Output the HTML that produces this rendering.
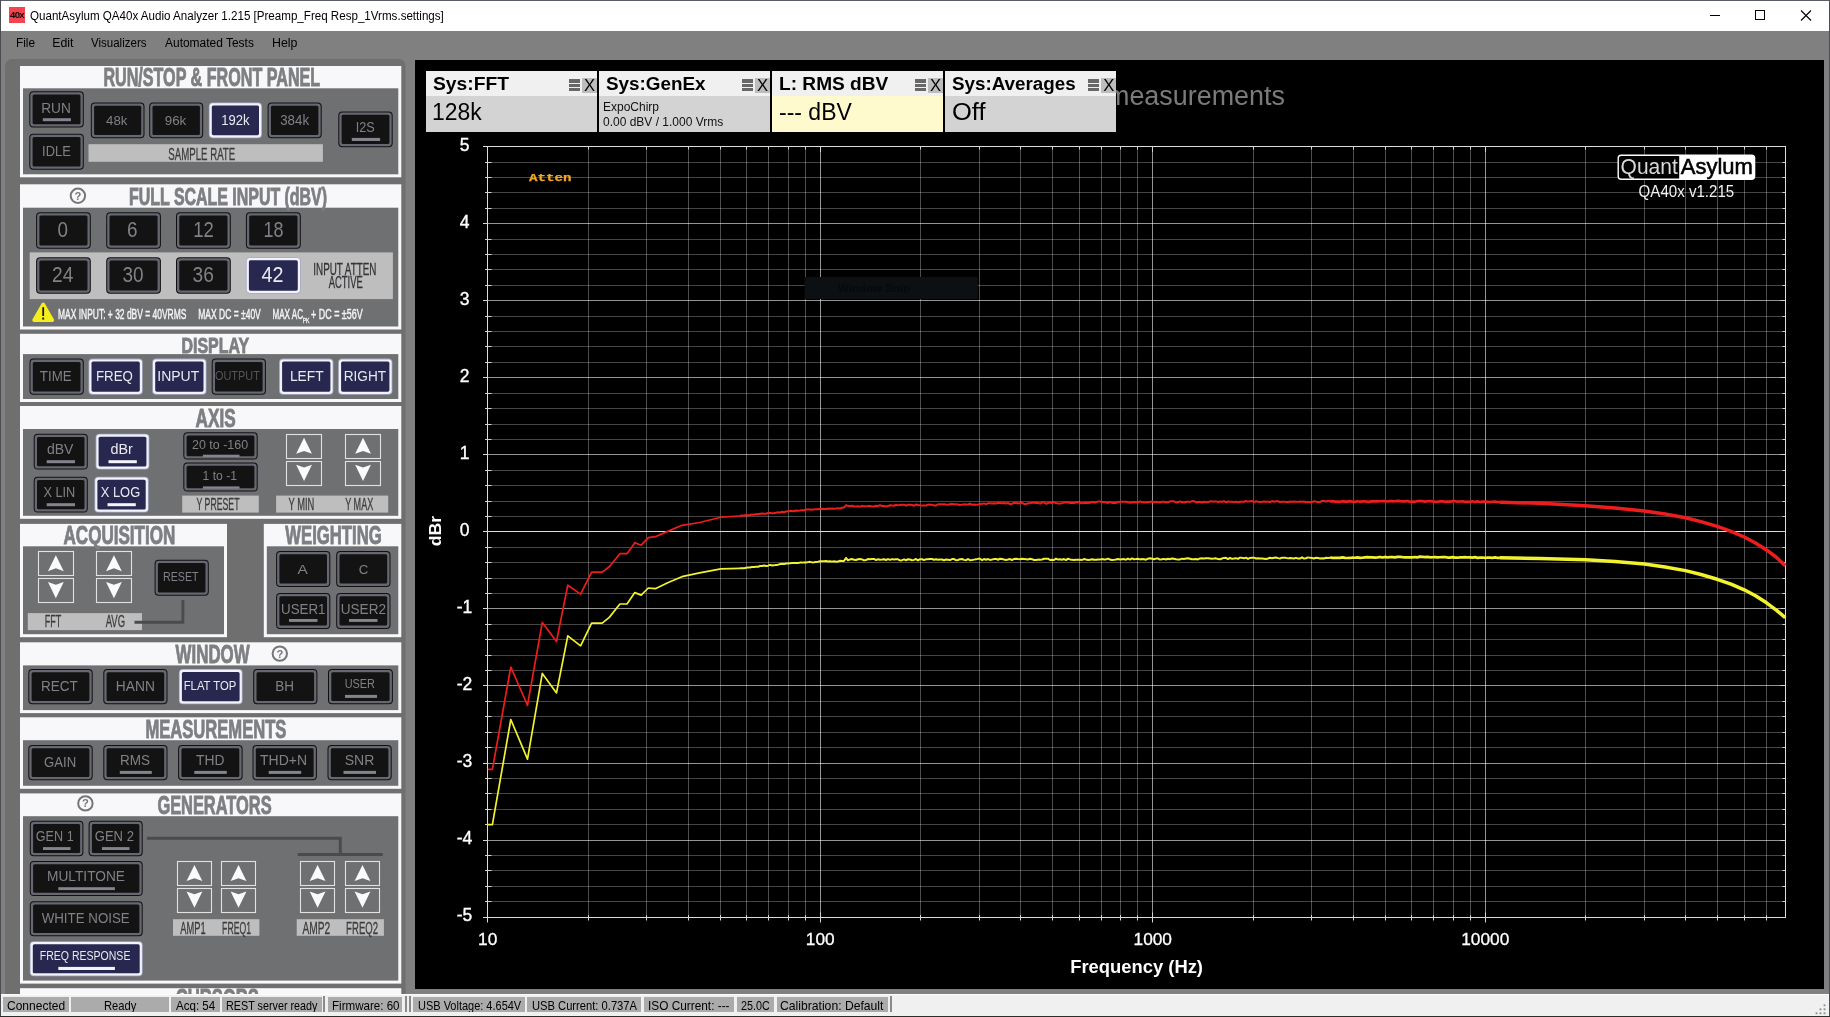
<!DOCTYPE html>
<html lang="en">
<head>
<meta charset="utf-8">
<title>QuantAsylum QA40x Audio Analyzer</title>
<style>
*{box-sizing:border-box;margin:0;padding:0}
html,body{width:1830px;height:1017px;overflow:hidden;background:#808080;font-family:"Liberation Sans",sans-serif}
#app{position:absolute;left:0;top:0;width:1830px;height:1017px;overflow:hidden;background:#808080}
#titlebar{position:absolute;left:0;top:0;width:1830px;height:31px;background:#ffffff;border-top:1px solid #5a5f66}
#appicon{position:absolute;left:9px;top:6.2px;width:16px;height:15.6px;background:#f4444f;color:#160808;font-size:9.6px;font-weight:bold;line-height:16.5px;letter-spacing:-0.7px;text-align:center;overflow:hidden}
#title{position:absolute;left:30.4px;top:7px;font-size:12.3px;line-height:16px;color:#000;white-space:nowrap;transform-origin:0 50%;transform:scaleX(0.9425)}
.wc{position:absolute;top:0px;height:29px;width:46px}
#menubar{position:absolute;left:0;top:31px;width:1830px;height:28px;background:#808080}
#menubar span{position:absolute;top:4px;font-size:12.3px;line-height:16px;color:#000;white-space:nowrap;transform-origin:0 50%}
#panel{position:absolute;left:0;top:0;width:414px;height:994.4px;overflow:hidden}
#panel svg{position:absolute;left:0;top:0}
#chartbg{position:absolute;left:414.8px;top:59.8px;width:1409.2px;height:929.2px;background:#000}
#chart{position:absolute;left:0;top:0;width:1830px;height:1017px;pointer-events:none}
svg text{font-family:"Liberation Sans",sans-serif}
#app{will-change:transform}
#meas{position:absolute;left:1106.7px;top:80px;font-size:27px;line-height:32px;color:#7b7b7b;white-space:nowrap;transform-origin:0 50%;transform:scaleX(0.996)}
.ib{position:absolute;top:71.2px;width:171px;height:60.4px;background:#d3d3d3;overflow:hidden}
.ib.yl{background:#fffacd}
.ih{position:absolute;left:0;top:0;width:171px;height:24.8px;background:#f0f0f0}
.it{position:absolute;left:7.2px;top:2.5px;font-size:17.6px;line-height:20px;font-weight:bold;color:#000;white-space:nowrap;transform-origin:0 50%}
.im{position:absolute;left:143.3px;top:8.3px;width:10.7px;height:13px}
.im i{display:block;height:3.2px;margin-bottom:1.2px;background:#686868}
.ix{position:absolute;left:156.1px;top:6.9px;width:15.1px;height:14.8px;background:#bdbdbd;color:#000;font-size:16.6px;line-height:15.6px;text-align:center}
.v1{position:absolute;left:6.6px;top:27.2px;font-size:24.2px;line-height:28px;color:#000;white-space:nowrap;transform-origin:0 50%}
.v2{position:absolute;left:4.4px;top:28.5px;font-size:12.2px;line-height:15px;color:#111;white-space:nowrap;transform-origin:0 50%;transform:scaleX(0.984)}
#statusbar{position:absolute;left:0;top:994.2px;width:1830px;height:22.8px;background:#f0f0f0;border-top:1.6px solid #fdfdfd}
.sc{position:absolute;top:1.7px;height:14.8px;background:#ababab;font-size:12.2px;line-height:14.6px;color:#000;white-space:nowrap;overflow:hidden}
.sc span{position:absolute;top:2.4px;transform-origin:0 50%}
.ss{position:absolute;top:1.2px;width:2px;height:15.6px;background:#8a8a8a}
#grip{position:absolute;left:1815px;top:8.4px;width:11px;height:11px}
#edgeR{position:absolute;left:1828.8px;top:0;width:1.2px;height:1017px;background:#4a4d52}
#edgeB{position:absolute;left:0;top:1015.6px;width:1830px;height:1.4px;background:#2a2d2a}
#edgeL{position:absolute;left:0;top:0;width:0.8px;height:1017px;background:#4a4d52}
</style>
</head>
<body>
<div id="app">
  <div id="menubar">
    <span style="left:15.5px;transform:scaleX(0.964)">File</span><span style="left:52.3px;transform:scaleX(1.000)">Edit</span><span style="left:91.4px;transform:scaleX(0.937)">Visualizers</span><span style="left:164.8px;transform:scaleX(0.973)">Automated Tests</span><span style="left:271.7px;transform:scaleX(1.008)">Help</span>
  </div>
  <div id="chartbg"></div>
  <div id="panel">
    <svg width="414" height="1000" viewBox="0 0 414 1000">
<rect x="5" y="59" width="400.6" height="941" fill="#6f6f70" rx="7"/>
<rect x="20" y="66" width="381.3" height="111.3" fill="#f8f8fa"/>
<rect x="23" y="88.3" width="375.3" height="86" fill="#6f7072"/>
<text x="103.4" y="85.6" font-size="25" textLength="216.8" lengthAdjust="spacingAndGlyphs" fill="#7d7f82" font-weight="bold" stroke="#7d7f82" stroke-width="0.9">RUN/STOP &amp; FRONT PANEL</text>
<rect x="29.3" y="91.3" width="54.5" height="36.2" fill="#101012" rx="4"/>
<rect x="30.3" y="92.3" width="52.5" height="34.2" fill="#676771" rx="3.2"/>
<rect x="32.6" y="94.6" width="47.9" height="29.6" fill="#131313" rx="1.5"/>
<text x="41.2" y="112.8" font-size="15.23" textLength="29.6" lengthAdjust="spacingAndGlyphs" fill="#808086" font-weight="normal">RUN</text>
<rect x="42.8" y="118.2" width="28.1" height="3" fill="#84848e"/>
<rect x="29.3" y="133.8" width="54.5" height="36" fill="#101012" rx="4"/>
<rect x="30.3" y="134.8" width="52.5" height="34" fill="#676771" rx="3.2"/>
<rect x="32.6" y="137.1" width="47.9" height="29.4" fill="#131313" rx="1.5"/>
<text x="42.1" y="156.3" font-size="14.66" textLength="28.7" lengthAdjust="spacingAndGlyphs" fill="#808086" font-weight="normal">IDLE</text>
<rect x="90.8" y="102.5" width="53.7" height="35.7" fill="#101012" rx="4"/>
<rect x="91.8" y="103.5" width="51.7" height="33.7" fill="#676771" rx="3.2"/>
<rect x="94.1" y="105.8" width="47.1" height="29.1" fill="#131313" rx="1.5"/>
<text x="106.1" y="125" font-size="13.68" textLength="21.3" lengthAdjust="spacingAndGlyphs" fill="#808086" font-weight="normal">48k</text>
<rect x="149.2" y="102.5" width="54" height="35.7" fill="#101012" rx="4"/>
<rect x="150.2" y="103.5" width="52" height="33.7" fill="#676771" rx="3.2"/>
<rect x="152.5" y="105.8" width="47.4" height="29.1" fill="#131313" rx="1.5"/>
<text x="164.7" y="125" font-size="13.68" textLength="21.6" lengthAdjust="spacingAndGlyphs" fill="#808086" font-weight="normal">96k</text>
<rect x="208.8" y="102.5" width="53.2" height="35.7" fill="#a9a9c4" rx="4"/>
<rect x="209.6" y="103.3" width="51.6" height="34.1" fill="#f2f2ff" rx="3.3"/>
<rect x="211.8" y="105.5" width="47.2" height="29.7" fill="#27274f" rx="1.6"/>
<text x="221.2" y="125" font-size="13.82" textLength="28.3" lengthAdjust="spacingAndGlyphs" fill="#e9e9f1" font-weight="normal">192k</text>
<rect x="267.6" y="102.5" width="54.1" height="35.7" fill="#101012" rx="4"/>
<rect x="268.6" y="103.5" width="52.1" height="33.7" fill="#676771" rx="3.2"/>
<rect x="270.9" y="105.8" width="47.5" height="29.1" fill="#131313" rx="1.5"/>
<text x="280.2" y="125" font-size="13.82" textLength="28.9" lengthAdjust="spacingAndGlyphs" fill="#808086" font-weight="normal">384k</text>
<rect x="338.3" y="111.5" width="54.4" height="35.8" fill="#101012" rx="4"/>
<rect x="339.3" y="112.5" width="52.4" height="33.8" fill="#676771" rx="3.2"/>
<rect x="341.6" y="114.8" width="47.8" height="29.2" fill="#131313" rx="1.5"/>
<text x="355.8" y="132.1" font-size="14.38" textLength="19" lengthAdjust="spacingAndGlyphs" fill="#808086" font-weight="normal">I2S</text>
<rect x="351.8" y="137.9" width="28.3" height="3.1" fill="#84848e"/>
<rect x="88.5" y="144.2" width="234.4" height="17.6" fill="#bebebf"/>
<text x="168.3" y="159.8" font-size="16.72" textLength="66.9" lengthAdjust="spacingAndGlyphs" fill="#3c3c3c" font-weight="normal" stroke="#3c3c3c" stroke-width="0.3">SAMPLE RATE</text>
<rect x="20" y="184.3" width="381.3" height="145.2" fill="#f8f8fa"/>
<rect x="23" y="207.7" width="375.3" height="118.8" fill="#6f7072"/>
<text x="129.1" y="204.5" font-size="23.55" textLength="197.9" lengthAdjust="spacingAndGlyphs" fill="#7d7f82" font-weight="bold" stroke="#7d7f82" stroke-width="0.9">FULL SCALE INPUT (dBV)</text>
<circle cx="77.9" cy="195.8" r="7.2" fill="none" stroke="#747679" stroke-width="2"/>
<text x="77.9" y="199.8" font-size="11.2" text-anchor="middle" fill="#747679" font-weight="bold">?</text>
<rect x="36.1" y="212.3" width="54.7" height="36.5" fill="#101012" rx="4"/>
<rect x="37.1" y="213.3" width="52.7" height="34.5" fill="#676771" rx="3.2"/>
<rect x="39.4" y="215.6" width="48.1" height="29.9" fill="#131313" rx="1.5"/>
<text x="57.5" y="236.9" font-size="21.15" textLength="10.5" lengthAdjust="spacingAndGlyphs" fill="#808086" font-weight="normal">0</text>
<rect x="106.2" y="212.3" width="54.7" height="36.5" fill="#101012" rx="4"/>
<rect x="107.2" y="213.3" width="52.7" height="34.5" fill="#676771" rx="3.2"/>
<rect x="109.5" y="215.6" width="48.1" height="29.9" fill="#131313" rx="1.5"/>
<text x="127.1" y="236.9" font-size="21.15" textLength="10.5" lengthAdjust="spacingAndGlyphs" fill="#808086" font-weight="normal">6</text>
<rect x="176" y="212.3" width="54.8" height="36.5" fill="#101012" rx="4"/>
<rect x="177" y="213.3" width="52.8" height="34.5" fill="#676771" rx="3.2"/>
<rect x="179.3" y="215.6" width="48.2" height="29.9" fill="#131313" rx="1.5"/>
<text x="193.2" y="236.9" font-size="21.15" textLength="20.6" lengthAdjust="spacingAndGlyphs" fill="#808086" font-weight="normal">12</text>
<rect x="245.9" y="212.3" width="54.9" height="36.5" fill="#101012" rx="4"/>
<rect x="246.9" y="213.3" width="52.9" height="34.5" fill="#676771" rx="3.2"/>
<rect x="249.2" y="215.6" width="48.3" height="29.9" fill="#131313" rx="1.5"/>
<text x="263.5" y="236.9" font-size="21.15" textLength="20" lengthAdjust="spacingAndGlyphs" fill="#808086" font-weight="normal">18</text>
<rect x="29.7" y="252.4" width="363.2" height="46.7" fill="#bebebf"/>
<rect x="36.1" y="257.3" width="54.7" height="36.4" fill="#101012" rx="4"/>
<rect x="37.1" y="258.3" width="52.7" height="34.4" fill="#676771" rx="3.2"/>
<rect x="39.4" y="260.6" width="48.1" height="29.8" fill="#131313" rx="1.5"/>
<text x="52.1" y="281.9" font-size="21.15" textLength="21.3" lengthAdjust="spacingAndGlyphs" fill="#808086" font-weight="normal">24</text>
<rect x="106.2" y="257.3" width="54.7" height="36.4" fill="#101012" rx="4"/>
<rect x="107.2" y="258.3" width="52.7" height="34.4" fill="#676771" rx="3.2"/>
<rect x="109.5" y="260.6" width="48.1" height="29.8" fill="#131313" rx="1.5"/>
<text x="122.4" y="281.9" font-size="21.15" textLength="21.1" lengthAdjust="spacingAndGlyphs" fill="#808086" font-weight="normal">30</text>
<rect x="176" y="257.3" width="54.8" height="36.4" fill="#101012" rx="4"/>
<rect x="177" y="258.3" width="52.8" height="34.4" fill="#676771" rx="3.2"/>
<rect x="179.3" y="260.6" width="48.2" height="29.8" fill="#131313" rx="1.5"/>
<text x="192.5" y="281.9" font-size="21.15" textLength="21.3" lengthAdjust="spacingAndGlyphs" fill="#808086" font-weight="normal">36</text>
<rect x="245.9" y="257.3" width="54.9" height="36.4" fill="#a9a9c4" rx="4"/>
<rect x="246.7" y="258.1" width="53.3" height="34.8" fill="#f2f2ff" rx="3.3"/>
<rect x="248.9" y="260.3" width="48.9" height="30.4" fill="#27274f" rx="1.6"/>
<text x="261.6" y="281.9" font-size="21.15" textLength="21.9" lengthAdjust="spacingAndGlyphs" fill="#e9e9f1" font-weight="normal">42</text>
<text x="313.3" y="275" font-size="16.28" textLength="63.1" lengthAdjust="spacingAndGlyphs" fill="#333336" font-weight="normal" stroke="#333336" stroke-width="0.3">INPUT ATTEN</text>
<text x="328.7" y="287.9" font-size="16.28" textLength="34" lengthAdjust="spacingAndGlyphs" fill="#333336" font-weight="normal" stroke="#333336" stroke-width="0.3">ACTIVE</text>
<path d="M43.2 304.2 L52.4 320.2 L34 320.2 Z" fill="#f6ee1a" stroke="#f6ee1a" stroke-width="3.4" stroke-linejoin="round"/>
<rect x="42.3" y="307.2" width="1.8" height="8.8" fill="#1a1a1a"/>
<rect x="42.3" y="317.5" width="1.8" height="2.1" fill="#1a1a1a"/>
<text x="58" y="319.3" font-size="14.53" textLength="128.4" lengthAdjust="spacingAndGlyphs" fill="#f4f4f4" font-weight="normal" stroke="#f4f4f4" stroke-width="0.45">MAX INPUT: + 32 dBV = 40VRMS</text>
<text x="198.2" y="319.3" font-size="14.53" textLength="62.6" lengthAdjust="spacingAndGlyphs" fill="#f4f4f4" font-weight="normal" stroke="#f4f4f4" stroke-width="0.45">MAX DC = ±40V</text>
<text x="272.5" y="319.3" font-size="14.53" textLength="30.5" lengthAdjust="spacingAndGlyphs" fill="#f4f4f4" font-weight="normal" stroke="#f4f4f4" stroke-width="0.45">MAX AC</text>
<text x="302.7" y="323" font-size="6.54" textLength="6.8" lengthAdjust="spacingAndGlyphs" fill="#f4f4f4" font-weight="normal" stroke="#f4f4f4" stroke-width="0.3">PK</text>
<text x="311" y="319.3" font-size="14.53" textLength="51.7" lengthAdjust="spacingAndGlyphs" fill="#f4f4f4" font-weight="normal" stroke="#f4f4f4" stroke-width="0.45">+ DC = ±56V</text>
<rect x="20" y="333.8" width="381.3" height="68.2" fill="#f8f8fa"/>
<rect x="23" y="354.1" width="375.3" height="44.9" fill="#6f7072"/>
<text x="181.5" y="352.5" font-size="22.67" textLength="67.6" lengthAdjust="spacingAndGlyphs" fill="#7d7f82" font-weight="bold" stroke="#7d7f82" stroke-width="0.9">DISPLAY</text>
<rect x="29.5" y="358.6" width="54.3" height="36.1" fill="#101012" rx="4"/>
<rect x="30.5" y="359.6" width="52.3" height="34.1" fill="#676771" rx="3.2"/>
<rect x="32.8" y="361.9" width="47.7" height="29.5" fill="#131313" rx="1.5"/>
<text x="39.8" y="381.1" font-size="14.1" textLength="31.8" lengthAdjust="spacingAndGlyphs" fill="#808086" font-weight="normal">TIME</text>
<rect x="88.5" y="358.6" width="54.3" height="36.1" fill="#a9a9c4" rx="4"/>
<rect x="89.3" y="359.4" width="52.7" height="34.5" fill="#f2f2ff" rx="3.3"/>
<rect x="91.5" y="361.6" width="48.3" height="30.1" fill="#27274f" rx="1.6"/>
<text x="96" y="381.1" font-size="14.1" textLength="36.9" lengthAdjust="spacingAndGlyphs" fill="#e9e9f1" font-weight="normal">FREQ</text>
<rect x="152.2" y="358.6" width="54.3" height="36.1" fill="#a9a9c4" rx="4"/>
<rect x="153" y="359.4" width="52.7" height="34.5" fill="#f2f2ff" rx="3.3"/>
<rect x="155.2" y="361.6" width="48.3" height="30.1" fill="#27274f" rx="1.6"/>
<text x="157.3" y="381.1" font-size="14.1" textLength="41.9" lengthAdjust="spacingAndGlyphs" fill="#e9e9f1" font-weight="normal">INPUT</text>
<rect x="211.7" y="358.6" width="54.2" height="36.1" fill="#101012" rx="4"/>
<rect x="212.7" y="359.6" width="52.2" height="34.1" fill="#676771" rx="3.2"/>
<rect x="215" y="361.9" width="47.6" height="29.5" fill="#131313" rx="1.5"/>
<text x="214.9" y="380.2" font-size="12.97" textLength="45" lengthAdjust="spacingAndGlyphs" fill="#55555a" font-weight="normal">OUTPUT</text>
<rect x="279.1" y="358.6" width="54.3" height="36.1" fill="#a9a9c4" rx="4"/>
<rect x="279.9" y="359.4" width="52.7" height="34.5" fill="#f2f2ff" rx="3.3"/>
<rect x="282.1" y="361.6" width="48.3" height="30.1" fill="#27274f" rx="1.6"/>
<text x="289.9" y="381.1" font-size="14.1" textLength="33.7" lengthAdjust="spacingAndGlyphs" fill="#e9e9f1" font-weight="normal">LEFT</text>
<rect x="338.1" y="358.6" width="54.3" height="36.1" fill="#a9a9c4" rx="4"/>
<rect x="338.9" y="359.4" width="52.7" height="34.5" fill="#f2f2ff" rx="3.3"/>
<rect x="341.1" y="361.6" width="48.3" height="30.1" fill="#27274f" rx="1.6"/>
<text x="343.7" y="381.1" font-size="14.1" textLength="42.4" lengthAdjust="spacingAndGlyphs" fill="#e9e9f1" font-weight="normal">RIGHT</text>
<rect x="20" y="406" width="381.3" height="112.8" fill="#f8f8fa"/>
<rect x="23" y="429" width="375.3" height="86.8" fill="#6f7072"/>
<text x="195.6" y="426.5" font-size="24.85" textLength="40.1" lengthAdjust="spacingAndGlyphs" fill="#7d7f82" font-weight="bold" stroke="#7d7f82" stroke-width="0.9">AXIS</text>
<rect x="33.7" y="433.7" width="54.1" height="35.9" fill="#101012" rx="4"/>
<rect x="34.7" y="434.7" width="52.1" height="33.9" fill="#676771" rx="3.2"/>
<rect x="37" y="437" width="47.5" height="29.3" fill="#131313" rx="1.5"/>
<text x="46.9" y="454.4" font-size="14.1" textLength="26.5" lengthAdjust="spacingAndGlyphs" fill="#808086" font-weight="normal">dBV</text>
<rect x="46.7" y="460.2" width="28.3" height="3" fill="#84848e"/>
<rect x="95.6" y="433.7" width="53.8" height="35.9" fill="#a9a9c4" rx="4"/>
<rect x="96.4" y="434.5" width="52.2" height="34.3" fill="#f2f2ff" rx="3.3"/>
<rect x="98.6" y="436.7" width="47.8" height="29.9" fill="#27274f" rx="1.6"/>
<text x="110.6" y="454.4" font-size="14.1" textLength="22.3" lengthAdjust="spacingAndGlyphs" fill="#e9e9f1" font-weight="normal">dBr</text>
<rect x="108.5" y="460.2" width="28.3" height="3" fill="#f4f4ff"/>
<rect x="33.7" y="476.7" width="54.1" height="35.9" fill="#101012" rx="4"/>
<rect x="34.7" y="477.7" width="52.1" height="33.9" fill="#676771" rx="3.2"/>
<rect x="37" y="480" width="47.5" height="29.3" fill="#131313" rx="1.5"/>
<text x="43.4" y="497.3" font-size="14.1" textLength="31.9" lengthAdjust="spacingAndGlyphs" fill="#808086" font-weight="normal">X LIN</text>
<rect x="46.7" y="503.2" width="28.3" height="3" fill="#84848e"/>
<rect x="94.4" y="476.7" width="54.3" height="35.9" fill="#a9a9c4" rx="4"/>
<rect x="95.2" y="477.5" width="52.7" height="34.3" fill="#f2f2ff" rx="3.3"/>
<rect x="97.4" y="479.7" width="48.3" height="29.9" fill="#27274f" rx="1.6"/>
<text x="100.7" y="497.3" font-size="14.1" textLength="39.5" lengthAdjust="spacingAndGlyphs" fill="#e9e9f1" font-weight="normal">X LOG</text>
<rect x="107.5" y="503.2" width="28.3" height="3" fill="#f4f4ff"/>
<rect x="183.3" y="432.3" width="74.4" height="27.3" fill="#101012" rx="4"/>
<rect x="184.3" y="433.3" width="72.4" height="25.3" fill="#676771" rx="3.2"/>
<rect x="186.6" y="435.6" width="67.8" height="20.7" fill="#131313" rx="1.5"/>
<text x="192" y="448.9" font-size="12.41" textLength="56.1" lengthAdjust="spacingAndGlyphs" fill="#808086" font-weight="normal">20 to -160</text>
<rect x="202.9" y="454.7" width="36.6" height="2.3" fill="#84848e"/>
<rect x="183.3" y="462.5" width="74.4" height="29.1" fill="#101012" rx="4"/>
<rect x="184.3" y="463.5" width="72.4" height="27.1" fill="#676771" rx="3.2"/>
<rect x="186.6" y="465.8" width="67.8" height="22.5" fill="#131313" rx="1.5"/>
<text x="202.6" y="480.2" font-size="13.25" textLength="34.4" lengthAdjust="spacingAndGlyphs" fill="#808086" font-weight="normal">1 to -1</text>
<rect x="202.9" y="486.4" width="36.6" height="2.4" fill="#84848e"/>
<rect x="182.2" y="495.6" width="76.6" height="17" fill="#bebebf"/>
<text x="196.5" y="509.8" font-size="16.28" textLength="43" lengthAdjust="spacingAndGlyphs" fill="#3c3c3c" font-weight="normal" stroke="#3c3c3c" stroke-width="0.3">Y PRESET</text>
<rect x="276.1" y="495.6" width="112.1" height="17" fill="#bebebf"/>
<text x="288.5" y="509.8" font-size="16.28" textLength="25.8" lengthAdjust="spacingAndGlyphs" fill="#3c3c3c" font-weight="normal" stroke="#3c3c3c" stroke-width="0.3">Y MIN</text>
<text x="345.2" y="509.8" font-size="16.28" textLength="28.1" lengthAdjust="spacingAndGlyphs" fill="#3c3c3c" font-weight="normal" stroke="#3c3c3c" stroke-width="0.3">Y MAX</text>
<rect x="286.5" y="434.5" width="35" height="24" fill="none" stroke="#e2e2e3" stroke-width="1.1"/>
<polygon points="304.05,437.85 311.95,453.85 304.05,451.05 296.15,453.85" fill="#fbfbfb"/>
<rect x="286.5" y="461.5" width="35" height="24" fill="none" stroke="#e2e2e3" stroke-width="1.1"/>
<polygon points="304.05,480.9 311.95,464.7 304.05,467.4 296.15,464.7" fill="#fbfbfb"/>
<rect x="345.5" y="434.5" width="35" height="24" fill="none" stroke="#e2e2e3" stroke-width="1.1"/>
<polygon points="363.05,437.85 370.95,453.85 363.05,451.05 355.15,453.85" fill="#fbfbfb"/>
<rect x="345.5" y="461.5" width="35" height="24" fill="none" stroke="#e2e2e3" stroke-width="1.1"/>
<polygon points="363.05,480.9 370.95,464.7 363.05,467.4 355.15,464.7" fill="#fbfbfb"/>
<rect x="20" y="523.9" width="207" height="113.3" fill="#f8f8fa"/>
<rect x="23" y="546.3" width="201" height="87.9" fill="#6f7072"/>
<text x="63.5" y="544" font-size="25.15" textLength="111.8" lengthAdjust="spacingAndGlyphs" fill="#7d7f82" font-weight="bold" stroke="#7d7f82" stroke-width="0.9">ACQUISITION</text>
<rect x="38.5" y="551.5" width="35" height="24" fill="none" stroke="#e2e2e3" stroke-width="1.1"/>
<polygon points="55.85,555.15 63.75,571.15 55.85,568.35 47.95,571.15" fill="#fbfbfb"/>
<rect x="38.5" y="578.5" width="35" height="24" fill="none" stroke="#e2e2e3" stroke-width="1.1"/>
<polygon points="55.85,598.15 63.75,581.95 55.85,584.65 47.95,581.95" fill="#fbfbfb"/>
<rect x="96.5" y="551.5" width="35" height="24" fill="none" stroke="#e2e2e3" stroke-width="1.1"/>
<polygon points="113.95,555.15 121.85,571.15 113.95,568.35 106.05,571.15" fill="#fbfbfb"/>
<rect x="96.5" y="578.5" width="35" height="24" fill="none" stroke="#e2e2e3" stroke-width="1.1"/>
<polygon points="113.95,598.15 121.85,581.95 113.95,584.65 106.05,581.95" fill="#fbfbfb"/>
<rect x="154.6" y="559.7" width="54.2" height="36.1" fill="#101012" rx="4"/>
<rect x="155.6" y="560.7" width="52.2" height="34.1" fill="#676771" rx="3.2"/>
<rect x="157.9" y="563" width="47.6" height="29.5" fill="#131313" rx="1.5"/>
<text x="163" y="581.3" font-size="13.39" textLength="35.5" lengthAdjust="spacingAndGlyphs" fill="#808086" font-weight="normal">RESET</text>
<rect x="27.8" y="613.1" width="114.2" height="17" fill="#bebebf"/>
<text x="44.8" y="627" font-size="16.86" textLength="16.6" lengthAdjust="spacingAndGlyphs" fill="#3c3c3c" font-weight="normal" stroke="#3c3c3c" stroke-width="0.3">FFT</text>
<text x="105.7" y="627" font-size="16.86" textLength="19.4" lengthAdjust="spacingAndGlyphs" fill="#3c3c3c" font-weight="normal" stroke="#3c3c3c" stroke-width="0.3">AVG</text>
<path d="M134.5 622.3 H182.9 V600" fill="none" stroke="#4b4b4d" stroke-width="2.9"/>
<rect x="263.8" y="523.9" width="137.5" height="113.3" fill="#f8f8fa"/>
<rect x="266.8" y="546.3" width="131.5" height="87.9" fill="#6f7072"/>
<text x="285.3" y="544" font-size="25.15" textLength="96.4" lengthAdjust="spacingAndGlyphs" fill="#7d7f82" font-weight="bold" stroke="#7d7f82" stroke-width="0.9">WEIGHTING</text>
<rect x="276.1" y="551" width="54.2" height="35.9" fill="#101012" rx="4"/>
<rect x="277.1" y="552" width="52.2" height="33.9" fill="#676771" rx="3.2"/>
<rect x="279.4" y="554.3" width="47.6" height="29.3" fill="#131313" rx="1.5"/>
<text x="297.5" y="573.5" font-size="13.39" textLength="10.3" lengthAdjust="spacingAndGlyphs" fill="#808086" font-weight="normal">A</text>
<rect x="336.2" y="551" width="54.3" height="35.9" fill="#101012" rx="4"/>
<rect x="337.2" y="552" width="52.3" height="33.9" fill="#676771" rx="3.2"/>
<rect x="339.5" y="554.3" width="47.7" height="29.3" fill="#131313" rx="1.5"/>
<text x="358.8" y="573.5" font-size="13.39" textLength="9.6" lengthAdjust="spacingAndGlyphs" fill="#808086" font-weight="normal">C</text>
<rect x="276.1" y="593" width="54.2" height="35.9" fill="#101012" rx="4"/>
<rect x="277.1" y="594" width="52.2" height="33.9" fill="#676771" rx="3.2"/>
<rect x="279.4" y="596.3" width="47.6" height="29.3" fill="#131313" rx="1.5"/>
<text x="281" y="613.5" font-size="14.24" textLength="44.5" lengthAdjust="spacingAndGlyphs" fill="#808086" font-weight="normal">USER1</text>
<rect x="289" y="619" width="28.5" height="2.9" fill="#84848e"/>
<rect x="336.2" y="593" width="54.3" height="35.9" fill="#101012" rx="4"/>
<rect x="337.2" y="594" width="52.3" height="33.9" fill="#676771" rx="3.2"/>
<rect x="339.5" y="596.3" width="47.7" height="29.3" fill="#131313" rx="1.5"/>
<text x="340.7" y="613.5" font-size="14.24" textLength="45.4" lengthAdjust="spacingAndGlyphs" fill="#808086" font-weight="normal">USER2</text>
<rect x="349" y="619" width="28.5" height="2.9" fill="#84848e"/>
<rect x="20" y="642.3" width="381.3" height="70.8" fill="#f8f8fa"/>
<rect x="23" y="665.4" width="375.3" height="44.7" fill="#6f7072"/>
<text x="175.6" y="663" font-size="25.73" textLength="74" lengthAdjust="spacingAndGlyphs" fill="#7d7f82" font-weight="bold" stroke="#7d7f82" stroke-width="0.9">WINDOW</text>
<circle cx="279.8" cy="653.6" r="7.2" fill="none" stroke="#747679" stroke-width="2"/>
<text x="279.8" y="657.6" font-size="11.2" text-anchor="middle" fill="#747679" font-weight="bold">?</text>
<rect x="28.3" y="668.9" width="64.4" height="35.4" fill="#101012" rx="4"/>
<rect x="29.3" y="669.9" width="62.4" height="33.4" fill="#676771" rx="3.2"/>
<rect x="31.6" y="672.2" width="57.8" height="28.8" fill="#131313" rx="1.5"/>
<text x="41" y="690.9" font-size="14.38" textLength="36.7" lengthAdjust="spacingAndGlyphs" fill="#808086" font-weight="normal">RECT</text>
<rect x="103.3" y="668.9" width="64.2" height="35.4" fill="#101012" rx="4"/>
<rect x="104.3" y="669.9" width="62.2" height="33.4" fill="#676771" rx="3.2"/>
<rect x="106.6" y="672.2" width="57.6" height="28.8" fill="#131313" rx="1.5"/>
<text x="115.8" y="690.9" font-size="14.38" textLength="39.1" lengthAdjust="spacingAndGlyphs" fill="#808086" font-weight="normal">HANN</text>
<rect x="178.9" y="668.9" width="63.7" height="35.4" fill="#a9a9c4" rx="4"/>
<rect x="179.7" y="669.7" width="62.1" height="33.8" fill="#f2f2ff" rx="3.3"/>
<rect x="181.9" y="671.9" width="57.7" height="29.4" fill="#27274f" rx="1.6"/>
<text x="183.7" y="690.3" font-size="13.25" textLength="52.6" lengthAdjust="spacingAndGlyphs" fill="#e9e9f1" font-weight="normal">FLAT TOP</text>
<rect x="253.2" y="668.9" width="64.2" height="35.4" fill="#101012" rx="4"/>
<rect x="254.2" y="669.9" width="62.2" height="33.4" fill="#676771" rx="3.2"/>
<rect x="256.5" y="672.2" width="57.6" height="28.8" fill="#131313" rx="1.5"/>
<text x="275.3" y="690.9" font-size="14.38" textLength="18.8" lengthAdjust="spacingAndGlyphs" fill="#808086" font-weight="normal">BH</text>
<rect x="328" y="668.9" width="64.9" height="35.4" fill="#101012" rx="4"/>
<rect x="329" y="669.9" width="62.9" height="33.4" fill="#676771" rx="3.2"/>
<rect x="331.3" y="672.2" width="58.3" height="28.8" fill="#131313" rx="1.5"/>
<text x="344.7" y="688.4" font-size="13.53" textLength="30.3" lengthAdjust="spacingAndGlyphs" fill="#808086" font-weight="normal">USER</text>
<rect x="345" y="694.9" width="32" height="3" fill="#84848e"/>
<rect x="20" y="717.3" width="381.3" height="71.5" fill="#f8f8fa"/>
<rect x="23" y="740.2" width="375.3" height="45.6" fill="#6f7072"/>
<text x="145.4" y="738.2" font-size="25.29" textLength="141" lengthAdjust="spacingAndGlyphs" fill="#7d7f82" font-weight="bold" stroke="#7d7f82" stroke-width="0.9">MEASUREMENTS</text>
<rect x="28.3" y="744.9" width="64.4" height="35.4" fill="#101012" rx="4"/>
<rect x="29.3" y="745.9" width="62.4" height="33.4" fill="#676771" rx="3.2"/>
<rect x="31.6" y="748.2" width="57.8" height="28.8" fill="#131313" rx="1.5"/>
<text x="44.1" y="767.4" font-size="14.1" textLength="32.2" lengthAdjust="spacingAndGlyphs" fill="#808086" font-weight="normal">GAIN</text>
<rect x="103.3" y="744.9" width="64.2" height="35.4" fill="#101012" rx="4"/>
<rect x="104.3" y="745.9" width="62.2" height="33.4" fill="#676771" rx="3.2"/>
<rect x="106.6" y="748.2" width="57.6" height="28.8" fill="#131313" rx="1.5"/>
<text x="120" y="765.1" font-size="14.1" textLength="30.1" lengthAdjust="spacingAndGlyphs" fill="#808086" font-weight="normal">RMS</text>
<rect x="119.8" y="770.9" width="32" height="3" fill="#84848e"/>
<rect x="178.1" y="744.9" width="64.5" height="35.4" fill="#101012" rx="4"/>
<rect x="179.1" y="745.9" width="62.5" height="33.4" fill="#676771" rx="3.2"/>
<rect x="181.4" y="748.2" width="57.9" height="28.8" fill="#131313" rx="1.5"/>
<text x="196" y="765.1" font-size="14.1" textLength="28.5" lengthAdjust="spacingAndGlyphs" fill="#808086" font-weight="normal">THD</text>
<rect x="194.3" y="770.9" width="32.5" height="3" fill="#84848e"/>
<rect x="252.5" y="744.9" width="64.4" height="35.4" fill="#101012" rx="4"/>
<rect x="253.5" y="745.9" width="62.4" height="33.4" fill="#676771" rx="3.2"/>
<rect x="255.8" y="748.2" width="57.8" height="28.8" fill="#131313" rx="1.5"/>
<text x="260" y="765.1" font-size="14.1" textLength="47" lengthAdjust="spacingAndGlyphs" fill="#808086" font-weight="normal">THD+N</text>
<rect x="268.7" y="770.9" width="32.5" height="3" fill="#84848e"/>
<rect x="327.5" y="744.9" width="64.2" height="35.4" fill="#101012" rx="4"/>
<rect x="328.5" y="745.9" width="62.2" height="33.4" fill="#676771" rx="3.2"/>
<rect x="330.8" y="748.2" width="57.6" height="28.8" fill="#131313" rx="1.5"/>
<text x="344.7" y="765.1" font-size="14.1" textLength="29.6" lengthAdjust="spacingAndGlyphs" fill="#808086" font-weight="normal">SNR</text>
<rect x="343.5" y="770.9" width="32.5" height="3" fill="#84848e"/>
<rect x="20" y="793.4" width="381.3" height="190.2" fill="#f8f8fa"/>
<rect x="23" y="816.2" width="375.3" height="164.4" fill="#6f7072"/>
<text x="157.4" y="814" font-size="25.58" textLength="114.2" lengthAdjust="spacingAndGlyphs" fill="#7d7f82" font-weight="bold" stroke="#7d7f82" stroke-width="0.9">GENERATORS</text>
<circle cx="85.4" cy="803.4" r="7.2" fill="none" stroke="#747679" stroke-width="2"/>
<text x="85.4" y="807.4" font-size="11.2" text-anchor="middle" fill="#747679" font-weight="bold">?</text>
<rect x="29.8" y="820.8" width="53.6" height="35.4" fill="#101012" rx="4"/>
<rect x="30.8" y="821.8" width="51.6" height="33.4" fill="#676771" rx="3.2"/>
<rect x="33.1" y="824.1" width="47" height="28.8" fill="#131313" rx="1.5"/>
<text x="35.8" y="841.2" font-size="13.96" textLength="37.9" lengthAdjust="spacingAndGlyphs" fill="#808086" font-weight="normal">GEN 1</text>
<rect x="43" y="847.1" width="27.5" height="2.9" fill="#84848e"/>
<rect x="88.6" y="820.8" width="54.1" height="35.4" fill="#101012" rx="4"/>
<rect x="89.6" y="821.8" width="52.1" height="33.4" fill="#676771" rx="3.2"/>
<rect x="91.9" y="824.1" width="47.5" height="28.8" fill="#131313" rx="1.5"/>
<text x="94.8" y="841.2" font-size="13.96" textLength="39.1" lengthAdjust="spacingAndGlyphs" fill="#808086" font-weight="normal">GEN 2</text>
<rect x="102" y="847.1" width="27.5" height="2.9" fill="#84848e"/>
<rect x="29.8" y="860.9" width="112.9" height="35.2" fill="#101012" rx="4"/>
<rect x="30.8" y="861.9" width="110.9" height="33.2" fill="#676771" rx="3.2"/>
<rect x="33.1" y="864.2" width="106.3" height="28.6" fill="#131313" rx="1.5"/>
<text x="47" y="881.4" font-size="14.8" textLength="78" lengthAdjust="spacingAndGlyphs" fill="#808086" font-weight="normal">MULTITONE</text>
<rect x="58.3" y="887.2" width="56.6" height="2.9" fill="#84848e"/>
<rect x="29.8" y="901.2" width="112.9" height="35" fill="#101012" rx="4"/>
<rect x="30.8" y="902.2" width="110.9" height="33" fill="#676771" rx="3.2"/>
<rect x="33.1" y="904.5" width="106.3" height="28.4" fill="#131313" rx="1.5"/>
<text x="41.7" y="922.8" font-size="13.96" textLength="88" lengthAdjust="spacingAndGlyphs" fill="#808086" font-weight="normal">WHITE NOISE</text>
<rect x="29.8" y="941.3" width="112.9" height="35" fill="#a9a9c4" rx="4"/>
<rect x="30.6" y="942.1" width="111.3" height="33.4" fill="#f2f2ff" rx="3.3"/>
<rect x="32.8" y="944.3" width="106.9" height="29" fill="#27274f" rx="1.6"/>
<text x="39.8" y="960.3" font-size="13.25" textLength="90.6" lengthAdjust="spacingAndGlyphs" fill="#e9e9f1" font-weight="normal">FREQ RESPONSE</text>
<rect x="58.3" y="966.9" width="56.6" height="3.1" fill="#f4f4ff"/>
<path d="M146.9 838.3 H340.3 V854.5 M297.7 854.5 H382.8" fill="none" stroke="#4b4b4d" stroke-width="3"/>
<rect x="177.5" y="861.5" width="34" height="24" fill="none" stroke="#e2e2e3" stroke-width="1.1"/>
<polygon points="194.45,865.1 202.35,881.1 194.45,878.3 186.55,881.1" fill="#fbfbfb"/>
<rect x="177.5" y="888.5" width="34" height="24" fill="none" stroke="#e2e2e3" stroke-width="1.1"/>
<polygon points="194.45,907.8 202.35,891.6 194.45,894.3 186.55,891.6" fill="#fbfbfb"/>
<rect x="221.5" y="861.5" width="34" height="24" fill="none" stroke="#e2e2e3" stroke-width="1.1"/>
<polygon points="238.55,865.1 246.45,881.1 238.55,878.3 230.65,881.1" fill="#fbfbfb"/>
<rect x="221.5" y="888.5" width="34" height="24" fill="none" stroke="#e2e2e3" stroke-width="1.1"/>
<polygon points="238.55,907.8 246.45,891.6 238.55,894.3 230.65,891.6" fill="#fbfbfb"/>
<rect x="300.5" y="861.5" width="34" height="24" fill="none" stroke="#e2e2e3" stroke-width="1.1"/>
<polygon points="317.6,865.1 325.5,881.1 317.6,878.3 309.7,881.1" fill="#fbfbfb"/>
<rect x="300.5" y="888.5" width="34" height="24" fill="none" stroke="#e2e2e3" stroke-width="1.1"/>
<polygon points="317.6,907.8 325.5,891.6 317.6,894.3 309.7,891.6" fill="#fbfbfb"/>
<rect x="345.5" y="861.5" width="34" height="24" fill="none" stroke="#e2e2e3" stroke-width="1.1"/>
<polygon points="362.5,865.1 370.4,881.1 362.5,878.3 354.6,881.1" fill="#fbfbfb"/>
<rect x="345.5" y="888.5" width="34" height="24" fill="none" stroke="#e2e2e3" stroke-width="1.1"/>
<polygon points="362.5,907.8 370.4,891.6 362.5,894.3 354.6,891.6" fill="#fbfbfb"/>
<rect x="173" y="919.2" width="86.4" height="16.6" fill="#bebebf"/>
<rect x="296.7" y="919.2" width="87.2" height="16.6" fill="#bebebf"/>
<text x="180.2" y="933.8" font-size="16.86" textLength="25.4" lengthAdjust="spacingAndGlyphs" fill="#3c3c3c" font-weight="normal" stroke="#3c3c3c" stroke-width="0.3">AMP1</text>
<text x="222.1" y="933.8" font-size="16.86" textLength="29" lengthAdjust="spacingAndGlyphs" fill="#3c3c3c" font-weight="normal" stroke="#3c3c3c" stroke-width="0.3">FREQ1</text>
<text x="302.5" y="933.8" font-size="16.86" textLength="27.8" lengthAdjust="spacingAndGlyphs" fill="#3c3c3c" font-weight="normal" stroke="#3c3c3c" stroke-width="0.3">AMP2</text>
<text x="346.1" y="933.8" font-size="16.86" textLength="32" lengthAdjust="spacingAndGlyphs" fill="#3c3c3c" font-weight="normal" stroke="#3c3c3c" stroke-width="0.3">FREQ2</text>
<rect x="20" y="988.2" width="381.3" height="71.8" fill="#f8f8fa"/>
<rect x="23" y="1011" width="375.3" height="46" fill="#6f7072"/>
<text x="175.8" y="1007" font-size="25" textLength="83.1" lengthAdjust="spacingAndGlyphs" fill="#7d7f82" font-weight="bold" stroke="#7d7f82" stroke-width="0.9">CURSORS</text>
    </svg>
  </div>
  <div id="meas">measurements</div>
  <svg id="chart" width="1830" height="1017" viewBox="0 0 1830 1017">
<path d="M487.5 901.5H1785.5M487.5 886.5H1785.5M487.5 870.5H1785.5M487.5 855.5H1785.5M487.5 824.5H1785.5M487.5 809.5H1785.5M487.5 793.5H1785.5M487.5 778.5H1785.5M487.5 747.5H1785.5M487.5 732.5H1785.5M487.5 716.5H1785.5M487.5 701.5H1785.5M487.5 670.5H1785.5M487.5 655.5H1785.5M487.5 639.5H1785.5M487.5 624.5H1785.5M487.5 593.5H1785.5M487.5 578.5H1785.5M487.5 562.5H1785.5M487.5 547.5H1785.5M487.5 516.5H1785.5M487.5 501.5H1785.5M487.5 485.5H1785.5M487.5 470.5H1785.5M487.5 439.5H1785.5M487.5 424.5H1785.5M487.5 408.5H1785.5M487.5 393.5H1785.5M487.5 362.5H1785.5M487.5 346.5H1785.5M487.5 331.5H1785.5M487.5 316.5H1785.5M487.5 285.5H1785.5M487.5 269.5H1785.5M487.5 254.5H1785.5M487.5 239.5H1785.5M487.5 208.5H1785.5M487.5 192.5H1785.5M487.5 177.5H1785.5M487.5 162.5H1785.5" stroke="#ffffff" stroke-opacity="0.27" stroke-width="1" fill="none"/>
<path d="M588.5 146.5V917.5M646.5 146.5V917.5M688.5 146.5V917.5M720.5 146.5V917.5M746.5 146.5V917.5M768.5 146.5V917.5M788.5 146.5V917.5M805.5 146.5V917.5M920.5 146.5V917.5M979.5 146.5V917.5M1020.5 146.5V917.5M1052.5 146.5V917.5M1079.5 146.5V917.5M1101.5 146.5V917.5M1120.5 146.5V917.5M1137.5 146.5V917.5M1253.5 146.5V917.5M1311.5 146.5V917.5M1353.5 146.5V917.5M1385.5 146.5V917.5M1411.5 146.5V917.5M1433.5 146.5V917.5M1453.5 146.5V917.5M1470.5 146.5V917.5M1585.5 146.5V917.5M1644.5 146.5V917.5M1685.5 146.5V917.5M1717.5 146.5V917.5M1744.5 146.5V917.5M1766.5 146.5V917.5" stroke="#ffffff" stroke-opacity="0.3" stroke-width="1" fill="none"/>
<path d="M487.5 840.5H1785.5M487.5 763.5H1785.5M487.5 685.5H1785.5M487.5 608.5H1785.5M487.5 454.5H1785.5M487.5 377.5H1785.5M487.5 300.5H1785.5M487.5 223.5H1785.5" stroke="#ffffff" stroke-opacity="0.58" stroke-width="1" fill="none"/>
<path d="M820.5 146.5V917.5M1152.5 146.5V917.5M1485.5 146.5V917.5" stroke="#ffffff" stroke-opacity="0.58" stroke-width="1" fill="none"/>
<path d="M483 146.5H1786M483 917.5H1786M483 531.5H1786M487.5 146V922.5M1785.5 146V918" stroke="#dcdcdc" stroke-width="1" fill="none"/>
<path d="M485 901.5H491.5M1782.5 901.5H1785.5M485 886.5H491.5M1782.5 886.5H1785.5M485 870.5H491.5M1782.5 870.5H1785.5M485 855.5H491.5M1782.5 855.5H1785.5M483 840.5H488M1780.5 840.5H1785.5M485 824.5H491.5M1782.5 824.5H1785.5M485 809.5H491.5M1782.5 809.5H1785.5M485 793.5H491.5M1782.5 793.5H1785.5M485 778.5H491.5M1782.5 778.5H1785.5M483 763.5H488M1780.5 763.5H1785.5M485 747.5H491.5M1782.5 747.5H1785.5M485 732.5H491.5M1782.5 732.5H1785.5M485 716.5H491.5M1782.5 716.5H1785.5M485 701.5H491.5M1782.5 701.5H1785.5M483 685.5H488M1780.5 685.5H1785.5M485 670.5H491.5M1782.5 670.5H1785.5M485 655.5H491.5M1782.5 655.5H1785.5M485 639.5H491.5M1782.5 639.5H1785.5M485 624.5H491.5M1782.5 624.5H1785.5M483 608.5H488M1780.5 608.5H1785.5M485 593.5H491.5M1782.5 593.5H1785.5M485 578.5H491.5M1782.5 578.5H1785.5M485 562.5H491.5M1782.5 562.5H1785.5M485 547.5H491.5M1782.5 547.5H1785.5M1780.5 531.5H1785.5M485 516.5H491.5M1782.5 516.5H1785.5M485 501.5H491.5M1782.5 501.5H1785.5M485 485.5H491.5M1782.5 485.5H1785.5M485 470.5H491.5M1782.5 470.5H1785.5M483 454.5H488M1780.5 454.5H1785.5M485 439.5H491.5M1782.5 439.5H1785.5M485 424.5H491.5M1782.5 424.5H1785.5M485 408.5H491.5M1782.5 408.5H1785.5M485 393.5H491.5M1782.5 393.5H1785.5M483 377.5H488M1780.5 377.5H1785.5M485 362.5H491.5M1782.5 362.5H1785.5M485 346.5H491.5M1782.5 346.5H1785.5M485 331.5H491.5M1782.5 331.5H1785.5M485 316.5H491.5M1782.5 316.5H1785.5M483 300.5H488M1780.5 300.5H1785.5M485 285.5H491.5M1782.5 285.5H1785.5M485 269.5H491.5M1782.5 269.5H1785.5M485 254.5H491.5M1782.5 254.5H1785.5M485 239.5H491.5M1782.5 239.5H1785.5M483 223.5H488M1780.5 223.5H1785.5M485 208.5H491.5M1782.5 208.5H1785.5M485 192.5H491.5M1782.5 192.5H1785.5M485 177.5H491.5M1782.5 177.5H1785.5M485 162.5H491.5M1782.5 162.5H1785.5M588.5 146.5V149.5M588.5 915V920.5M646.5 146.5V149.5M646.5 915V920.5M688.5 146.5V149.5M688.5 915V920.5M720.5 146.5V149.5M720.5 915V920.5M746.5 146.5V149.5M746.5 915V920.5M768.5 146.5V149.5M768.5 915V920.5M788.5 146.5V149.5M788.5 915V920.5M805.5 146.5V149.5M805.5 915V920.5M920.5 146.5V149.5M920.5 915V920.5M979.5 146.5V149.5M979.5 915V920.5M1020.5 146.5V149.5M1020.5 915V920.5M1052.5 146.5V149.5M1052.5 915V920.5M1079.5 146.5V149.5M1079.5 915V920.5M1101.5 146.5V149.5M1101.5 915V920.5M1120.5 146.5V149.5M1120.5 915V920.5M1137.5 146.5V149.5M1137.5 915V920.5M1253.5 146.5V149.5M1253.5 915V920.5M1311.5 146.5V149.5M1311.5 915V920.5M1353.5 146.5V149.5M1353.5 915V920.5M1385.5 146.5V149.5M1385.5 915V920.5M1411.5 146.5V149.5M1411.5 915V920.5M1433.5 146.5V149.5M1433.5 915V920.5M1453.5 146.5V149.5M1453.5 915V920.5M1470.5 146.5V149.5M1470.5 915V920.5M1585.5 146.5V149.5M1585.5 915V920.5M1644.5 146.5V149.5M1644.5 915V920.5M1685.5 146.5V149.5M1685.5 915V920.5M1717.5 146.5V149.5M1717.5 915V920.5M1744.5 146.5V149.5M1744.5 915V920.5M1766.5 146.5V149.5M1766.5 915V920.5M820.5 146.5V152M820.5 912.5V922.5M1152.5 146.5V152M1152.5 912.5V922.5M1485.5 146.5V152M1485.5 912.5V922.5" stroke="#d4d4d4" stroke-width="1" fill="none"/>
<rect x="804.6" y="277" width="173.1" height="22" fill="#0d1013"/>
<text x="838" y="292.3" font-size="11.5" text-anchor="start" fill="#07090b" font-weight="bold">Window Snip</text>
<polyline fill="none" stroke="#ee1c1c" stroke-width="1.7" stroke-linejoin="round" points="487.8,769.4 492.4,769.4 510.8,667 527.5,705.3 542.3,622.4 556.5,641.5 567.8,585.2 580.6,594.1 591.6,572.1 602.2,572.1 609.3,566.8 619.9,553.7 627,553.7 634.8,542.7 641.2,545.2 648.3,537.7 655.3,536.7 667.7,531.4 681.9,525.3 699.6,522.5 720.9,517.2 740,516"/>
<polyline fill="none" stroke="#ee1c1c" stroke-width="2.0" stroke-linejoin="round" points="740,515.84 742,515.5 744,515.76 746,515.06 748,515.29 750,514.95 752,514.48 754,514.7 756,514.09 758,514.26 760,513.75 762,513.58 764,513.69 766,513.87 768,513.05 770,512.95 772,513.13 774,513.23 776,512.71 778,512.36 780,512.7 782,511.67 784,512.22 786,511.52 788,511.2 790,510.99 792,510.97 794,511.24 796,510.49 798,510.66 800,510.53 802,510.15 804,510.17 806,509.6 808,509.46 810,509.45 812,509.74 814,509.38 816,509.14 818,509.25 820,508.99 822,508.72 824,509.09 826,508.93 828,508.44 830,508.66 832,508.54 834,508.78 836,508.57 838,508.1 840,508.65 842,507.79 844,507.46 846,505.19 848,505.84 850,506.31 852,505.6 854,506.5 856,506.61 858,506.29 860,506.7 862,505.82 864,506.36 866,506.17 868,506.11 870,505.89 872,506.43 874,506.55 876,505.81 878,506.05 880,505.11 882,506.04 884,505.92 886,506.4 888,506.11 890,505.26 892,505.38 894,505.76 896,504.76 898,505.38 900,504.9 902,504.79 904,504.67 906,505.7 908,504.71 910,504.85 912,505.03 914,505.72 916,504.5 918,505.02 920,505.13 922,505.6 924,505.47 926,505.5 928,504.59 930,504.76 932,504.64 934,505.4 936,505.47 938,504.23 940,504.23 942,504.28 944,504.25 946,504.6 948,504.72 950,504.19 952,503.77 954,504.36 956,504.25 958,504.51 960,505.06 962,504.63 964,504.34 966,504.45 968,504.51 970,503.54 972,504.78 974,504.56 976,504.67 978,504.52 980,503.88 982,503.85 984,503.38 986,504.14 988,503.25 990,503.22 992,503.4 994,503.3 996,503.53 998,503.06 1000,502.95 1002,503.15 1004,503.05 1006,503.41 1008,502.88 1010,504.12 1012,503.7 1014,502.98 1016,503.1 1018,503.22 1020,503.22 1022,502.83 1024,503.89 1026,504.08 1028,503.26 1030,503.26 1032,502.63 1034,502.63 1036,502.96 1038,502.82 1040,503.63 1042,502.6 1044,502.37 1046,503.73 1048,503.07 1050,502.47 1052,503.04 1054,502.23 1056,502.96 1058,503.61 1060,503.4 1062,503.13 1064,502.45 1066,502.58 1068,502.25 1070,503.13 1072,502.74 1074,503.08 1076,502.38 1078,502.19 1080,503.05 1082,503.28 1084,503.05 1086,502.96 1088,502.95 1090,502.8 1092,502 1094,502.41 1096,502.14 1098,501.62 1100,501.59 1102,501.96 1104,501.91 1106,502.55 1108,502.93 1110,502.15 1112,502.88 1114,502.94 1116,502.88 1118,501.98 1120,501.75 1122,501.74 1124,501.69 1126,501.68 1128,502.3 1130,502.7 1132,502.6 1134,502.04 1136,502.29 1138,502.5 1140,501.41 1142,502.26 1144,502.62 1146,502.42 1148,502.36 1150,501.93 1152,501.47 1154,502.37 1156,501.68 1158,502.36 1160,502.61 1162,501.74 1164,501.74 1166,502.56 1168,502.22 1170,501.38 1172,501.31 1174,501.35 1176,502.47 1178,502.32 1180,501.33 1182,502.34 1184,502.57 1186,502.08 1188,501.62 1190,501.91 1192,501.28 1194,501.1 1196,502.53 1198,502.04 1200,501.85 1202,502.46 1204,501.71 1206,502.36 1208,502.29 1210,501.36 1212,501.42 1214,501.47 1216,501.39 1218,501.91 1220,501.41 1222,501.65 1224,501.21 1226,502.37 1228,501.53 1230,501.69 1232,501.87 1234,502.35 1236,501.62 1238,502.36 1240,501.73 1242,501.77 1244,501.76 1246,500.99 1248,501.62 1250,501.23 1252,500.96 1254,502.15 1256,501.2 1258,501.65 1260,502.02 1262,501.77 1264,501.42 1266,501.7 1268,501.75 1270,502.09 1272,501.07 1274,501.75 1276,501.27 1278,501.31 1280,502.05 1282,501.65 1284,501.73 1286,502.02 1288,502.24 1290,501.54 1292,501.79 1294,501.62 1296,501.63 1298,501.89 1300,501.53 1302,501.64 1304,501.56 1306,502.24 1308,501.87 1310,502.13 1312,502.23 1314,501.2 1316,501.64 1318,502.21 1320,502.05 1322,500.99 1324,500.96 1326,501.44 1328,500.87 1330,501.51"/>
<polyline fill="none" stroke="#ee1c1c" stroke-width="2.7" stroke-linejoin="round" points="1330,501.3 1332.5,501.16 1335,501.63 1337.5,501.71 1340,501.8 1342.5,501.2 1345,501.64 1347.5,501.59 1350,501.16 1352.5,501.75 1355,501.81 1357.5,501.2 1360,501.78 1362.5,501.33 1365,501.39 1367.5,501.79 1370,501.66 1372.5,501.11 1375,501.32 1377.5,501.38 1380,501.23 1382.5,501.11 1385,501.2 1387.5,501.52 1390,500.95 1392.5,501.37 1395,501.27 1397.5,500.92 1400,501.17 1402.5,501.41 1405,501.33 1407.5,500.99 1410,501.74 1412.5,501.59 1415,501.75 1417.5,501.07 1420,501.21 1422.5,501.04 1425,501.64 1427.5,501.25 1430,501.15 1432.5,501.39 1435,501.79 1437.5,501.73 1440,501.3 1442.5,501.22 1445,501.85 1447.5,501.58 1450,501.7 1452.5,501.22 1455,501.21 1457.5,501.72 1460,501.52 1462.5,501.25 1465,501.96 1467.5,501.73 1470,501.87 1472.5,501.31 1475,501.94 1477.5,501.32 1480,501.97 1482.5,501.65 1485,501.58 1487.5,501.83 1490,502.2 1492.5,501.74 1495,501.7 1497.5,502.09 1500,502.14"/>
<polyline fill="none" stroke="#ee1c1c" stroke-width="3.5" stroke-linejoin="round" points="1500,502.14 1540,503.3 1585.6,505.7 1615,508 1644.4,511.1 1665,514 1685.5,517.7 1701,521.6 1717.2,526.4 1731,531.3 1744.2,537 1755.5,543 1766.5,549.9 1776,557 1785.3,565.6"/>
<polyline fill="none" stroke="#f2f22e" stroke-width="1.7" stroke-linejoin="round" points="487.8,824.7 492.4,824.7 510.8,719.5 527.5,759.1 542.3,673.4 556.5,692.9 567.8,635.9 580.6,645.8 591.6,623.1 602.2,623.1 609.3,617.4 619.9,604 627,604 634.8,592.6 641.2,595.1 648.3,588 655.3,588.7 667.7,582.7 681.9,576.7 699.6,572.8 720.9,568.8 740,568.4"/>
<polyline fill="none" stroke="#f2f22e" stroke-width="2.0" stroke-linejoin="round" points="740,568.36 742,568.25 744,568.37 746,567.75 748,567.58 750,567.45 752,566.88 754,566.96 756,566.86 758,566.8 760,565.97 762,565.95 764,565.55 766,565.99 768,565.68 770,564.89 772,565.55 774,565.36 776,564.9 778,564.68 780,564.09 782,563.78 784,564.07 786,563.46 788,563.4 790,563.27 792,562.9 794,563.11 796,562.91 798,563.09 800,562.62 802,562.62 804,562.38 806,562.42 808,562.13 810,561.85 812,562.39 814,562.28 816,562.03 818,561.81 820,561.34 822,561.16 824,561.19 826,560.98 828,561.58 830,561.23 832,561.62 834,561.18 836,561.68 838,561.56 840,560.78 842,560.95 844,561.04 846,557.95 848,560.32 850,559.45 852,558.97 854,559.81 856,560.04 858,559.28 860,559.01 862,559.38 864,560.33 866,560.02 868,559.07 870,559.26 872,559.05 874,558.99 876,560.1 878,559.18 880,559.75 882,559.59 884,559.21 886,560.02 888,559.12 890,559.9 892,559.11 894,559.57 896,559.26 898,559.35 900,560.41 902,560.15 904,559.39 906,560.26 908,559.24 910,559.51 912,560.2 914,559.87 916,559.05 918,560.38 920,559.21 922,559.27 924,560.04 926,559.37 928,559.31 930,558.97 932,558.99 934,559.72 936,559.21 938,559.74 940,559.39 942,559.5 944,560.26 946,559.54 948,559.67 950,560.1 952,559.07 954,559.02 956,560.14 958,560 960,559.14 962,559.05 964,559.87 966,560.16 968,559.04 970,560.17 972,560.06 974,559.63 976,559.35 978,558.87 980,558.77 982,560.15 984,559.06 986,559.75 988,559.07 990,559.92 992,559.57 994,559.11 996,558.93 998,559.74 1000,558.75 1002,558.99 1004,559.49 1006,559.92 1008,559.56 1010,559.06 1012,560.01 1014,558.94 1016,558.66 1018,559.04 1020,559.3 1022,558.72 1024,558.89 1026,559.18 1028,559.48 1030,558.82 1032,559.16 1034,559.95 1036,560.08 1038,559.6 1040,559.65 1042,559.48 1044,558.82 1046,558.66 1048,558.63 1050,559.97 1052,559.65 1054,560.04 1056,558.63 1058,559.55 1060,559.31 1062,559.68 1064,559.06 1066,560.08 1068,558.69 1070,559.4 1072,559.68 1074,559.93 1076,559.68 1078,559.63 1080,559.76 1082,559.94 1084,559.09 1086,559.59 1088,559.91 1090,559.87 1092,559.18 1094,559.74 1096,559.85 1098,559.41 1100,559.49 1102,559.11 1104,559.4 1106,559.43 1108,558.63 1110,559.46 1112,559.98 1114,559.8 1116,559.56 1118,559.04 1120,559.55 1122,559.31 1124,559.09 1126,559.68 1128,558.54 1130,559.53 1132,558.43 1134,559.28 1136,559.09 1138,558.71 1140,559.4 1142,559.09 1144,559.25 1146,559.7 1148,558.69 1150,558.32 1152,558.74 1154,559.3 1156,558.57 1158,558.51 1160,559.61 1162,559.23 1164,558.88 1166,559.54 1168,558.68 1170,559.18 1172,558.46 1174,558.8 1176,559.34 1178,559.49 1180,559.43 1182,558.67 1184,558.95 1186,558.54 1188,558.25 1190,558.78 1192,559.28 1194,559.28 1196,559.06 1198,559.4 1200,558.38 1202,558.2 1204,558.61 1206,558.33 1208,558.23 1210,558.51 1212,558.82 1214,558.61 1216,558.32 1218,559.09 1220,559.29 1222,558.49 1224,557.9 1226,557.83 1228,559.07 1230,557.81 1232,558.8 1234,558.58 1236,558.17 1238,558.88 1240,557.71 1242,557.87 1244,558.33 1246,557.67 1248,558.87 1250,557.96 1252,557.8 1254,557.65 1256,558.51 1258,558.22 1260,558.48 1262,558.5 1264,558.72 1266,558.93 1268,558.51 1270,557.76 1272,558.16 1274,557.7 1276,557.44 1278,558.12 1280,558.46 1282,557.65 1284,557.77 1286,557.87 1288,558.38 1290,558.1 1292,558.23 1294,558.43 1296,557.87 1298,558.45 1300,558.61 1302,557.36 1304,558.62 1306,558.28 1308,557.38 1310,557.85 1312,558.09 1314,558.5 1316,557.68 1318,557.95 1320,558.4 1322,558.26 1324,558.47 1326,557.73 1328,557.99 1330,557.75"/>
<polyline fill="none" stroke="#f2f22e" stroke-width="2.7" stroke-linejoin="round" points="1330,557.51 1332.5,557.91 1335,557.96 1337.5,557.8 1340,557.84 1342.5,557.42 1345,557.94 1347.5,557.99 1350,557.97 1352.5,557.59 1355,557.77 1357.5,557.38 1360,557.83 1362.5,557.76 1365,557.34 1367.5,557.1 1370,557.37 1372.5,557.44 1375,557.59 1377.5,557.34 1380,556.96 1382.5,557.56 1385,556.94 1387.5,557.51 1390,556.99 1392.5,557.1 1395,557.44 1397.5,556.9 1400,556.89 1402.5,557.16 1405,557.3 1407.5,557.38 1410,557.23 1412.5,557.42 1415,557.04 1417.5,557.38 1420,556.67 1422.5,556.8 1425,557.07 1427.5,556.9 1430,557.28 1432.5,557.23 1435,557.16 1437.5,557.44 1440,557.23 1442.5,557.06 1445,557.14 1447.5,557.53 1450,557.6 1452.5,557.07 1455,557.61 1457.5,557.72 1460,557.39 1462.5,557.45 1465,557.18 1467.5,557.47 1470,557.47 1472.5,557.57 1475,557.13 1477.5,557.91 1480,557.57 1482.5,557.5 1485,557.85 1487.5,557.7 1490,557.68 1492.5,557.88 1495,557.42 1497.5,557.84 1500,557.85"/>
<polyline fill="none" stroke="#f2f22e" stroke-width="3.5" stroke-linejoin="round" points="1500,557.85 1540,558.5 1585.6,559.8 1615,561.6 1644.4,564 1665,567 1685.5,570.6 1701,574.5 1717.2,579.3 1731,584.2 1744.2,589.8 1755.5,595.8 1766.5,602.8 1776,609.8 1785.3,617.6"/>
<text x="464.5" y="921.04" font-size="17.5" text-anchor="middle" fill="#ffffff" font-weight="normal" stroke="#fff" stroke-width="0.35">-5</text>
<text x="464.5" y="843.99" font-size="17.5" text-anchor="middle" fill="#ffffff" font-weight="normal" stroke="#fff" stroke-width="0.35">-4</text>
<text x="464.5" y="766.94" font-size="17.5" text-anchor="middle" fill="#ffffff" font-weight="normal" stroke="#fff" stroke-width="0.35">-3</text>
<text x="464.5" y="689.89" font-size="17.5" text-anchor="middle" fill="#ffffff" font-weight="normal" stroke="#fff" stroke-width="0.35">-2</text>
<text x="464.5" y="612.84" font-size="17.5" text-anchor="middle" fill="#ffffff" font-weight="normal" stroke="#fff" stroke-width="0.35">-1</text>
<text x="464.5" y="535.79" font-size="17.5" text-anchor="middle" fill="#ffffff" font-weight="normal" stroke="#fff" stroke-width="0.35">0</text>
<text x="464.5" y="458.74" font-size="17.5" text-anchor="middle" fill="#ffffff" font-weight="normal" stroke="#fff" stroke-width="0.35">1</text>
<text x="464.5" y="381.69" font-size="17.5" text-anchor="middle" fill="#ffffff" font-weight="normal" stroke="#fff" stroke-width="0.35">2</text>
<text x="464.5" y="304.64" font-size="17.5" text-anchor="middle" fill="#ffffff" font-weight="normal" stroke="#fff" stroke-width="0.35">3</text>
<text x="464.5" y="227.59" font-size="17.5" text-anchor="middle" fill="#ffffff" font-weight="normal" stroke="#fff" stroke-width="0.35">4</text>
<text x="464.5" y="150.54" font-size="17.5" text-anchor="middle" fill="#ffffff" font-weight="normal" stroke="#fff" stroke-width="0.35">5</text>
<text x="487.7" y="944.9" font-size="17.3" text-anchor="middle" fill="#ffffff" font-weight="normal" stroke="#fff" stroke-width="0.3">10</text>
<text x="820.23" y="944.9" font-size="17.3" text-anchor="middle" fill="#ffffff" font-weight="normal" stroke="#fff" stroke-width="0.3">100</text>
<text x="1152.76" y="944.9" font-size="17.3" text-anchor="middle" fill="#ffffff" font-weight="normal" stroke="#fff" stroke-width="0.3">1000</text>
<text x="1485.29" y="944.9" font-size="17.3" text-anchor="middle" fill="#ffffff" font-weight="normal" stroke="#fff" stroke-width="0.3">10000</text>
<text x="1070.2" y="973.4" font-size="17.44" textLength="132.8" lengthAdjust="spacingAndGlyphs" fill="#ffffff" font-weight="bold">Frequency (Hz)</text>
<text transform="translate(441.3 546.2) rotate(-90)" font-size="17" font-weight="bold" fill="#ffffff" textLength="30.4" lengthAdjust="spacingAndGlyphs">dBr</text>
<text x="529" y="181.4" font-size="11.6" font-weight="bold" fill="#f4a62a" stroke="#f4a62a" stroke-width="0.25" style="font-family:'Liberation Mono',monospace" textLength="42.6" lengthAdjust="spacingAndGlyphs">Atten</text>
<rect x="1618.2" y="155.2" width="136.4" height="24" fill="#000000" rx="3" stroke="#ffffff" stroke-width="1.4"/>
<path d="M1679.2 155.2 H1751.6 a3 3 0 0 1 3 3 V176.2 a3 3 0 0 1 -3 3 H1679.2 Z" fill="#ffffff"/>
<text x="1620.6" y="173.5" font-size="21.8" textLength="57.2" lengthAdjust="spacingAndGlyphs" fill="#d8d8d8" font-weight="normal">Quant</text>
<text x="1680.8" y="173.5" font-size="21.8" textLength="72" lengthAdjust="spacingAndGlyphs" fill="#000000" font-weight="normal" stroke="#000" stroke-width="0.55">Asylum</text>
<text x="1638.6" y="197.4" font-size="15.99" textLength="95.6" lengthAdjust="spacingAndGlyphs" fill="#f2f2f2" font-weight="normal">QA40x v1.215</text>
  </svg>
<div class="ib" style="left:425.8px"><div class="ih"><span class="it" style="transform:scaleX(1.096)">Sys:FFT</span><span class="im"><i></i><i></i><i></i></span><span class="ix">X</span></div><div class="v1" style="transform:scaleX(0.947)">128k</div></div>
<div class="ib" style="left:598.9px"><div class="ih"><span class="it" style="transform:scaleX(1.072)">Sys:GenEx</span><span class="im"><i></i><i></i><i></i></span><span class="ix">X</span></div><div class="v2">ExpoChirp<br>0.00 dBV / 1.000 Vrms</div></div>
<div class="ib yl" style="left:772px"><div class="ih"><span class="it" style="transform:scaleX(1.086)">L: RMS dBV</span><span class="im"><i></i><i></i><i></i></span><span class="ix">X</span></div><div class="v1" style="transform:scaleX(0.951)">--- dBV</div></div>
<div class="ib" style="left:945.2px"><div class="ih"><span class="it" style="transform:scaleX(1.068)">Sys:Averages</span><span class="im"><i></i><i></i><i></i></span><span class="ix">X</span></div><div class="v1" style="transform:scaleX(1.056)">Off</div></div>
  <div id="titlebar">
    <div id="appicon">40x</div>
    <div id="title">QuantAsylum QA40x Audio Analyzer 1.215 [Preamp_Freq Resp_1Vrms.settings]</div>
    <svg class="wc" style="left:1692px" viewBox="0 0 46 29"><path d="M18 14.5H28" stroke="#000" stroke-width="1"/></svg>
    <svg class="wc" style="left:1737px" viewBox="0 0 46 29"><rect x="18.5" y="9.5" width="9" height="9" fill="none" stroke="#000" stroke-width="1"/></svg>
    <svg class="wc" style="left:1783px" viewBox="0 0 46 29"><path d="M18 9.5L28 19.5M28 9.5L18 19.5" stroke="#000" stroke-width="1.1"/></svg>
  </div>
  <div id="statusbar">
<div class="sc" style="left:2.6px;width:66.8px"><span style="left:4.4px;transform:scaleX(0.985)">Connected</span></div>
<div class="sc" style="left:71.2px;width:97.8px"><span style="left:32.6px;transform:scaleX(0.919)">Ready</span></div>
<div class="sc" style="left:171px;width:48.7px"><span style="left:5.2px;transform:scaleX(0.947)">Acq: 54</span></div>
<div class="sc" style="left:221.7px;width:100.1px"><span style="left:4px;transform:scaleX(0.884)">REST server ready</span></div>
<div class="sc" style="left:327.8px;width:74.4px"><span style="left:4px;transform:scaleX(0.950)">Firmware: 60</span></div>
<div class="sc" style="left:413.3px;width:112.1px"><span style="left:4.3px;transform:scaleX(0.901)">USB Voltage: 4.654V</span></div>
<div class="sc" style="left:527.4px;width:113.6px"><span style="left:4.2px;transform:scaleX(0.917)">USB Current: 0.737A</span></div>
<div class="sc" style="left:644px;width:90px"><span style="left:3.8px;transform:scaleX(0.971)">ISO Current: ---</span></div>
<div class="sc" style="left:737px;width:37.3px"><span style="left:3.6px;transform:scaleX(0.885)">25.0C</span></div>
<div class="sc" style="left:776.8px;width:111.6px"><span style="left:3.5px;transform:scaleX(0.998)">Calibration: Default</span></div>
<div class="ss" style="left:323.2px"></div>
<div class="ss" style="left:405px"></div>
<div class="ss" style="left:409.1px"></div>
<div class="ss" style="left:890.2px"></div>
    <svg id="grip" viewBox="0 0 11 11"><g fill="#8c8c8c"><rect x="8.6" y="0.4" width="1.8" height="1.8"/><rect x="4.6" y="4.4" width="1.8" height="1.8"/><rect x="8.6" y="4.4" width="1.8" height="1.8"/><rect x="0.6" y="8.4" width="1.8" height="1.8"/><rect x="4.6" y="8.4" width="1.8" height="1.8"/><rect x="8.6" y="8.4" width="1.8" height="1.8"/></g></svg>
  </div>
  <div id="edgeL"></div><div id="edgeR"></div><div id="edgeB"></div>
</div>
</body>
</html>
